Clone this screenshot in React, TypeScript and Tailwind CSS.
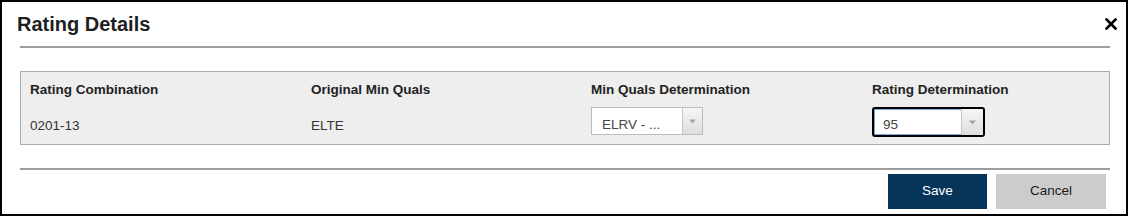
import React from 'react';

const font = { fontFamily: '"Liberation Sans", Arial, sans-serif' };

const Caret: React.FC = () => (
  <svg width="7" height="5" viewBox="0 0 7 5">
    <path d="M0 0.5h7L3.5 4.5z" fill="#a3a3a3" />
  </svg>
);

interface SelectBoxProps {
  value: string;
  focused?: boolean;
}

/**
 * Dropdown look-alike used in the determination columns
 */
const SelectBox: React.FC<SelectBoxProps> = ({ value, focused = false }) => {
  if (focused) {
    return (
      <div className="w-[113px] h-[30px] mt-[9px] flex border-2 border-black rounded-[3px] bg-white shadow-[inset_0_0_0_1px_#7aa7e0] overflow-hidden">
        <div className="flex-1 pl-[9px] pt-[8px] leading-[16px] text-[#444]">{value}</div>
        <div className="w-[22px] flex items-center justify-center border-l border-[#c8c8c8] bg-gradient-to-b from-[#f6f6f6] to-[#dedede]">
          <Caret />
        </div>
      </div>
    );
  }
  return (
    <div className="w-[112px] h-[28px] mt-[9px] flex border border-[#bcbcbc] bg-white">
      <div className="flex-1 pl-[10px] pt-[9px] leading-[16px] text-[#444]">{value}</div>
      <div className="w-[20px] flex items-center justify-center border-l border-[#c8c8c8] bg-gradient-to-b from-[#f6f6f6] to-[#dedede]">
        <Caret />
      </div>
    </div>
  );
};

export default function App() {
  return (
    <div className="w-[1130px] h-[217px] bg-white" style={font}>
      <div className="w-[1128px] h-[216px] border-2 border-black flex flex-col">
        {/* Header */}
        <div className="flex items-start justify-between pl-[15px] pr-[9px] pt-[10px] h-[44px]">
          <h1 className="text-[20px] leading-[24px] font-bold text-[#1e1e1e]">Rating Details</h1>
          <svg width="12" height="12" viewBox="0 0 12 12" className="mt-[6px]">
            <path d="M1.5 1.5l9 9M10.5 1.5l-9 9" stroke="#000" strokeWidth="2.6" strokeLinecap="square" />
          </svg>
        </div>
        <div className="ml-[18px] w-[1090px] h-[2px] bg-[#9d9d9d]" />

        {/* Details panel */}
        <div className="ml-[18px] mt-[23px] w-[1090px] h-[74px] border border-[#ababab] bg-[#eeeeee] pl-[9px] pt-[10px] text-[13.5px]">
          <div className="grid grid-cols-[281px_280px_281px_1fr]">
            <div>
              <div className="leading-[16px] font-bold text-[#222]">Rating Combination</div>
              <div className="leading-[16px] mt-[19.5px] text-[#333]">0201-13</div>
            </div>
            <div>
              <div className="leading-[16px] font-bold text-[#222]">Original Min Quals</div>
              <div className="leading-[16px] mt-[19.5px] text-[#333]">ELTE</div>
            </div>
            <div>
              <div className="leading-[16px] font-bold text-[#222]">Min Quals Determination</div>
              <SelectBox value="ELRV - ..." />
            </div>
            <div>
              <div className="leading-[16px] font-bold text-[#222]">Rating Determination</div>
              <SelectBox value="95" focused />
            </div>
          </div>
        </div>

        {/* Footer */}
        <div className="ml-[18px] mt-[23px] w-[1090px] h-[2px] bg-[#9d9d9d]" />
        <div className="flex justify-end gap-[9px] mt-[4px] mr-[20px] text-[13.5px]">
          <button className="w-[99px] h-[35px] bg-[#07355a] text-white">Save</button>
          <button className="w-[110px] h-[35px] bg-[#cccccc] text-[#1a1a1a]">Cancel</button>
        </div>
      </div>
    </div>
  );
}
